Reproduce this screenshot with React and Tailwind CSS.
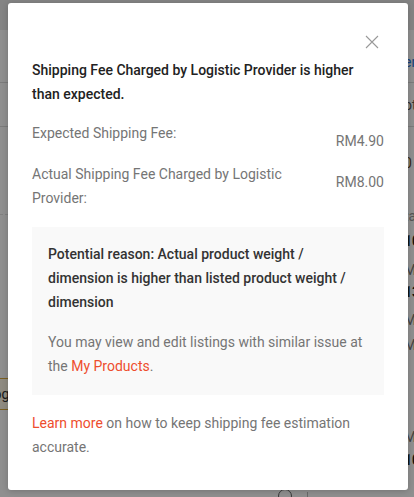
import React from 'react'

const RIGHT_BITS = [
  { text: 'er', top: 'mt-[54px]', color: 'text-[#2673dd]' },
  { text: 'ot', top: 'mt-[27px]', color: 'text-[#555]' },
  { text: '0', top: 'mt-[42px]', color: 'text-[#6b4a1a]' },
  { text: 'ta', top: 'mt-[37px]', color: 'text-[#999]' },
  { text: '10', top: 'mt-[9px]', color: 'text-[#222] font-bold' },
  { text: 'M', top: 'mt-[13px]', color: 'text-[#777]' },
  { text: '13', top: 'mt-[6px]', color: 'text-[#222] font-bold' },
  { text: 'M', top: 'mt-[12px]', color: 'text-[#777]' },
  { text: 'M', top: 'mt-[9px]', color: 'text-[#777]' },
  { text: 'M', top: 'mt-[76px]', color: 'text-[#777]' },
  { text: '10', top: 'mt-[7px]', color: 'text-[#222] font-bold' },
]

function BackgroundPage() {
  return (
    <div className="flex h-full w-full flex-col bg-white">
      <div className="h-[30px] bg-[#ececec]" />
      <div className="h-[53px] border-b border-[#dcdcdc]" />
      <div className="h-[44px] border-b border-[#dcdcdc]" />
      <div className="h-[88px] border-b border-dashed border-[#e2e2e2]" />
      <div className="mt-[163px] flex h-[32px] w-[60px] items-center border-y border-[#d9a93c] bg-[#fff8e6] pl-[-20px] text-[14px] text-[#333]">
        <span className="-ml-[14px]">Logi</span>
      </div>
    </div>
  )
}

function RightEdge() {
  return (
    <div className="flex h-full flex-col text-[14px] leading-4 whitespace-nowrap">
      {RIGHT_BITS.map((b, i) => (
        <span key={i} className={`${b.top} ${b.color}`}>{b.text}</span>
      ))}
    </div>
  )
}

export default function App() {
  return (
    <div className="relative h-[497px] w-[414px] overflow-hidden font-['Roboto','Liberation_Sans',sans-serif]">
      <BackgroundPage />
      <div className="absolute top-0 left-[403px] h-full w-[20px] pl-[1px]">
        <RightEdge />
      </div>
      <div className="absolute top-[489px] left-[278px] h-[14px] w-[14px] rounded-full border border-[#666]" />
      <div className="absolute top-[492px] left-[307px] h-[6px] w-px bg-[#bbb]" />

      {/* overlay */}
      <div className="absolute inset-0 bg-[rgba(0,0,0,0.44)]" />

      {/* modal */}
      <div className="absolute top-[3px] left-[8px] w-[400px] rounded-[3px] bg-white px-6 pt-[55px] pb-[31px] text-[14px] leading-6 shadow-[0_1px_6px_rgba(0,0,0,0.2)]">
        <button type="button" className="absolute top-[32px] right-[29px] text-[#999]">
          <svg width="14" height="14" viewBox="0 0 14 14" fill="none" stroke="currentColor" strokeWidth="1.1">
            <path d="M1 1 13 13M13 1 1 13" />
          </svg>
        </button>

        <div className="font-medium text-[#222]">
          Shipping Fee Charged by Logistic Provider is higher than expected.
        </div>

        <div className="mt-[15px] flex justify-between gap-12 text-[#757575]">
          <span>Expected Shipping Fee:</span>
          <span className="mt-2 shrink-0">RM4.90</span>
        </div>

        <div className="mt-[9px] flex justify-between gap-12 text-[#757575]">
          <span>Actual Shipping Fee Charged by Logistic Provider:</span>
          <span className="mt-2 shrink-0">RM8.00</span>
        </div>

        <div className="mt-[17px] bg-[#f9f9f9] px-4 pt-[15px] pb-[17px]">
          <div className="font-medium text-[#333]">
            Potential reason: Actual product weight / dimension is higher than listed product weight / dimension
          </div>
          <div className="mt-4 text-[#757575]">
            You may view and edit listings with similar issue at the{' '}
            <span className="text-[#ee4d2d]">My Products</span>.
          </div>
        </div>

        <div className="mt-4 text-[#757575]">
          <span className="text-[#ee4d2d]">Learn more</span> on how to keep shipping fee estimation accurate.
        </div>
      </div>
    </div>
  )
}
